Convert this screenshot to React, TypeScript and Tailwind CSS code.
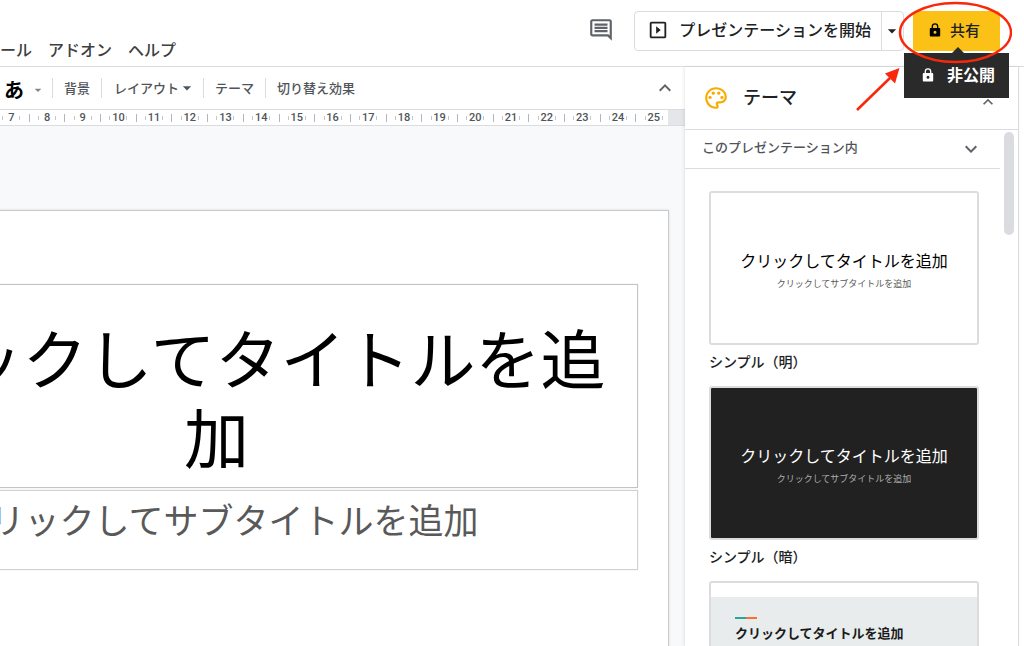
import React from 'react';
import {
  MdArrowDropDown,
  MdExpandLess,
  MdExpandMore,
  MdOutlineComment,
  MdOutlinePalette,
  MdOutlineSlideshow,
} from 'react-icons/md';

const menus = ['ツール', 'アドオン', 'ヘルプ'];

const rulerMarks = Array.from({ length: 19 }, (_, i) => i + 7);

interface Theme {
  name: string;
  variant: 'light' | 'dark' | 'streamline';
}

const themes: Theme[] = [
  { name: 'シンプル（明）', variant: 'light' },
  { name: 'シンプル（暗）', variant: 'dark' },
  { name: 'ストリームライン', variant: 'streamline' },
];

function Separator() {
  return <span className="h-5 w-px shrink-0 bg-[#dadce0]" />;
}

function LockIcon({ className }: { className?: string }) {
  return (
    <svg className={className} viewBox="0 0 12 14" fill="none">
      <path d="M3.300 6V3.600a2.700 2.700 0 0 1 5.400 0V6" stroke="currentColor" strokeWidth="1.300" />
      <path
        fill="currentColor"
        fillRule="evenodd"
        d="M1.700 5h8.600a.9.9 0 0 1 .9.9v6.700a.9.9 0 0 1-.9.900H1.700a.9.9 0 0 1-.9-.900V5.900a.9.9 0 0 1 .9-.9ZM6 7.700a1.500 1.500 0 1 0 0 3A1.500 1.500 0 0 0 6 7.700Z"
      />
    </svg>
  );
}

function Annotation() {
  return (
    <svg
      className="pointer-events-none absolute -top-2.5 -right-3 z-20 h-[114px] w-[160px]"
      viewBox="0 0 160 114"
      fill="none"
    >
      <ellipse cx="103.500" cy="31.500" rx="55.500" ry="29.500" stroke="#f9280c" strokeWidth="2.500" />
      <path d="M5 109L38 77" stroke="#f9280c" strokeWidth="2.600" />
      <path d="M47.500 67L43 82.500L33 72.500Z" fill="#f9280c" />
    </svg>
  );
}

function ShareButton() {
  return (
    <div className="relative">
      <button className="flex h-10 items-center gap-2 rounded-[3px] bg-[#fbc116] pr-5 pb-0.5 pl-[15px] text-[15px] leading-6 font-medium whitespace-nowrap text-[#202124]">
        <LockIcon className="h-3.5 w-3.5 text-black" />
        共有
      </button>
      <div
        role="tooltip"
        className="absolute top-[42px] -right-[9px] z-10 flex h-[45px] items-center gap-3 bg-[#2a2a2a] pr-3.5 pb-1 pl-[17px] text-base leading-6 font-bold whitespace-nowrap text-white"
      >
        <span className="absolute -top-1.5 left-12 border-x-[6px] border-b-[6px] border-x-transparent border-b-[#2a2a2a]" />
        <LockIcon className="mt-0.5 h-3.5 w-3.5" />
        非公開
      </div>
      <Annotation />
    </div>
  );
}

function Header() {
  return (
    <header className="flex h-[67px] shrink-0 items-start border-b border-[#dadce0] pt-[11px] pr-6">
      <nav className="-ml-4 flex gap-4 pt-[26px]">
        {menus.map(menu => (
          <button key={menu} className="text-base leading-6 font-medium whitespace-nowrap text-[#3c4043]">
            {menu}
          </button>
        ))}
      </nav>
      <div className="ml-auto flex items-start gap-[9px]">
        <button aria-label="コメント" className="mt-[5px] mr-2.5 flex size-7 items-center justify-center text-[#5f6368]">
          <MdOutlineComment className="size-[26px]" />
        </button>
        <div className="flex h-10 rounded-[4px] border border-[#dadce0] text-[#202124]">
          <button className="flex items-center gap-2.5 pr-2.5 pb-1 pl-3 text-base leading-6 font-medium whitespace-nowrap">
            <MdOutlineSlideshow className="mt-0.5 size-[22px]" />
            プレゼンテーションを開始
          </button>
          <button aria-label="その他" className="flex w-[22px] items-center justify-center border-l border-[#dadce0]">
            <MdArrowDropDown className="size-5 shrink-0" />
          </button>
        </div>
        <ShareButton />
      </div>
    </header>
  );
}

function Toolbar() {
  return (
    <div className="flex h-[42px] shrink-0 items-center text-[13px] leading-5 font-medium whitespace-nowrap text-[#50545a]">
      <button className="flex w-[52px] shrink-0 items-center gap-1.5 pt-1 pl-1 text-xl leading-6 font-bold text-black">
        あ
        <MdArrowDropDown className="size-4 text-[#80868b]" />
      </button>
      <Separator />
      <button className="px-[11px]">背景</button>
      <Separator />
      <button className="flex items-center pr-1.5 pl-3">
        レイアウト
        <MdArrowDropDown className="-ml-0.5 size-5" />
      </button>
      <Separator />
      <button className="px-[11px]">テーマ</button>
      <Separator />
      <button className="px-[11px]">切り替え効果</button>
      <button aria-label="メニューを非表示" className="mr-2 ml-auto text-[#5f6368]">
        <MdExpandLess className="size-6" />
      </button>
    </div>
  );
}

function Ruler() {
  return (
    <div className="flex h-[17px] shrink-0 border-y border-[#dadce0] bg-[#e4e6e9] pr-[17px]">
      <div className="flex-1 overflow-hidden bg-white">
        <div className="-mr-1 -ml-1.5 flex h-full items-center">
          {rulerMarks.map(mark => (
            <React.Fragment key={mark}>
              <div className="flex flex-1 basis-0 items-center justify-center font-[Roboto] text-[11px] leading-3 font-medium text-[#50545a]">
                <span className="h-1 w-px bg-[#c4c7cc]" />
                <span className="w-4 text-center">{mark}</span>
                <span className="h-1 w-px bg-[#c4c7cc]" />
              </div>
              <span className="h-2 w-px bg-[#b4b8be]" />
            </React.Fragment>
          ))}
        </div>
      </div>
    </div>
  );
}

function Editor() {
  return (
    <main className="flex min-w-0 flex-1 flex-col">
      <Toolbar />
      <Ruler />
      <div className="flex-1 overflow-hidden bg-[#f8f9fa] pt-[84px] pr-4">
        <section className="-ml-[236px] aspect-video border border-[#c9cacc] bg-white px-[30px] pt-[73px] text-center shadow-[0_0_2px_rgba(60,64,67,0.2)]">
          <div className="flex h-[204px] items-end justify-center border border-[#c4c4c4] pb-3 shadow-[0_0_1px_rgba(0,0,0,0.2)]">
            <h1 className="text-[65px] leading-[79px] text-black">クリックしてタイトルを追加</h1>
          </div>
          <div className="mt-0.5 h-20 border border-[#d0d0d0] pt-1 shadow-[0_0_1px_rgba(0,0,0,0.15)]">
            <p className="text-[35px] leading-[48px] whitespace-nowrap text-[#595959]">
              クリックしてサブタイトルを追加
            </p>
          </div>
        </section>
      </div>
    </main>
  );
}

function ThemePreview({ variant }: { variant: Theme['variant'] }) {
  if (variant === 'streamline') {
    return (
      <div className="h-full pt-3.5">
        <div className="h-full bg-[#e8eced] px-6 pt-5 text-left">
          <div className="flex h-0.5">
            <span className="w-[11px] bg-[#26a69a]" />
            <span className="w-[11px] bg-[#ff6e2e]" />
          </div>
          <p className="mt-1 text-[13px] leading-5 font-bold text-[#1a1a1a]">クリックしてタイトルを追加</p>
        </div>
      </div>
    );
  }
  const dark = variant === 'dark';
  return (
    <div className={dark ? 'h-full bg-[#212121] pt-[55px]' : 'h-full bg-white pt-[55px]'}>
      <p className={dark ? 'text-base leading-6 text-white' : 'text-base leading-6 text-black'}>
        クリックしてタイトルを追加
      </p>
      <p className={dark ? 'mt-1 text-[9px] leading-4 text-[#adadad]' : 'mt-1 text-[9px] leading-4 text-[#595959]'}>
        クリックしてサブタイトルを追加
      </p>
    </div>
  );
}

function ThemePanel() {
  return (
    <aside className="z-[1] flex w-[334px] shrink-0 flex-col border-r border-[#dadce0] bg-white shadow-[-1px_0_3px_rgba(60,64,67,0.12)]">
      <div className="flex h-[63px] shrink-0 items-center border-b border-[#dadce0] pr-5 pl-[18px]">
        <MdOutlinePalette className="size-[26px] text-[#f9ab00]" />
        <h2 className="ml-3.5 pb-1 text-lg leading-6 font-medium text-[#202124]">テーマ</h2>
        <button aria-label="閉じる" className="mt-2 ml-auto text-[#5f6368]">
          <MdExpandLess className="size-5" />
        </button>
      </div>
      <div className="flex min-h-0 flex-1">
        <div className="flex-1 overflow-hidden">
          <button className="flex h-[39px] w-full items-center justify-between border-b border-[#dadce0] pr-[17px] pl-[17px] text-[13px] leading-5 font-medium text-[#50545a]">
            <span className="pb-1">このプレゼンテーション内</span>
            <MdExpandMore className="size-6 text-[#5f6368]" />
          </button>
          <ul className="pt-[22px] pr-[21px] pl-6">
            {themes.map(({ name, variant }) => (
              <li key={name}>
                <button className="block w-full text-sm font-medium text-[#202124]">
                  <div className="h-[154px] overflow-hidden rounded-[3px] border-2 border-[#dadce0] font-normal">
                    <ThemePreview variant={variant} />
                  </div>
                  <div className="pt-1.5 pb-[15px] text-left leading-5">{name}</div>
                </button>
              </li>
            ))}
          </ul>
        </div>
        <div className="w-[18px] pt-0.5 pl-1">
          <div className="h-[103px] w-2.5 rounded-full bg-[#dadce0]" />
        </div>
      </div>
    </aside>
  );
}

export default function App() {
  return (
    <div className="flex h-screen flex-col overflow-hidden bg-white font-['Noto_Sans_CJK_JP',sans-serif]">
      <Header />
      <div className="flex min-h-0 flex-1 pr-[5px]">
        <Editor />
        <ThemePanel />
      </div>
    </div>
  );
}
